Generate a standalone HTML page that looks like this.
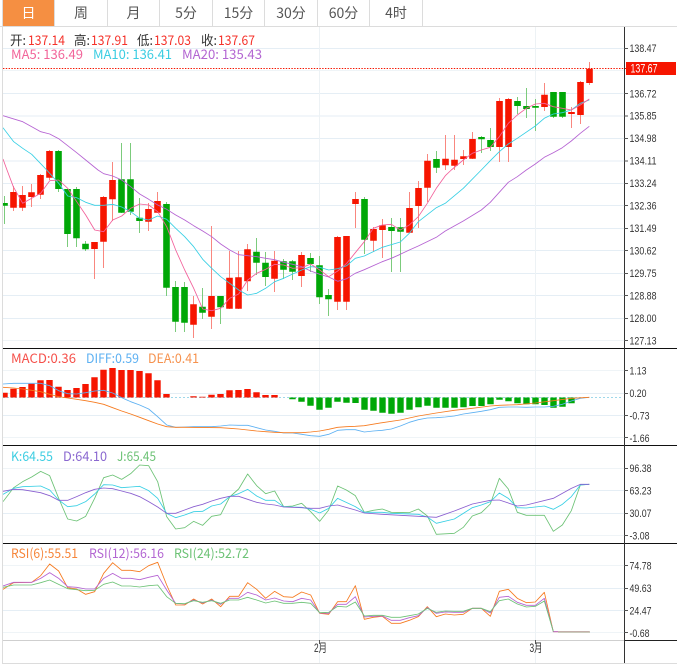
<!DOCTYPE html>
<html>
<head>
<meta charset="utf-8">
<style>
html,body{margin:0;padding:0;background:#fff;width:677px;height:670px;overflow:hidden}
svg{display:block;position:absolute;left:0;top:0}
text{font-family:"Liberation Sans","Noto Sans CJK SC",sans-serif}
.n text{font-family:"Noto Sans CJK SC","Liberation Sans",sans-serif;font-size:13px}
.t{font-family:"Noto Sans CJK SC","Liberation Sans",sans-serif;font-size:14px;fill:#555;text-anchor:middle}
.a text{font-size:11px;fill:#333}
.l{fill:none;stroke-width:.85;vector-effect:non-scaling-stroke;stroke-linejoin:round}
</style>
</head>
<body>
<svg width="677" height="670" viewBox="0 0 677 670" xmlns="http://www.w3.org/2000/svg">
<defs><clipPath id="c"><rect x="3" y="27" width="621" height="636"/></clipPath></defs>

<!-- tabs -->
<rect x="3" y="0" width="51" height="26" fill="#f58f42"/>
<path d="M54.5 0V26M107.5 0V26M159.5 0V26M212.5 0V26M264.5 0V26M317.5 0V26M369.5 0V26M422.5 0V26" stroke="#dcdcdc" fill="none"/>
<path d="M0 26.5H677" stroke="#dcdcdc"/>
<path d="M2.5 0V663.5H677" stroke="#dcdcdc" fill="none"/>
<text x="28.5" y="18" class="t" style="fill:#fff">日</text>
<text x="81" y="18" class="t">周</text>
<text x="133.5" y="18" class="t">月</text>
<text x="186" y="18" class="t">5分</text>
<text x="238.5" y="18" class="t">15分</text>
<text x="291" y="18" class="t">30分</text>
<text x="343.5" y="18" class="t">60分</text>
<text x="396" y="18" class="t">4时</text>

<!-- grid -->
<path d="M3 48.5H624M3 93.5H624M3 116H624M3 138.5H624M3 161H624M3 183.5H624M3 205.5H624M3 228.5H624M3 250.5H624M3 273.5H624M3 295.5H624M3 318.5H624M3 393.5H624M3 415.5H624M3 490.5H624M3 513.5H624M3 588.5H624M3 610.5H624" stroke="#e5eef5"/>
<path d="M3 70.5H624M3 340.5H624M3 370.5H624M3 437.5H624M3 468.5H624M3 535.5H624M3 565.5H624M3 632.5H624" stroke="#eff4f7"/>
<path d="M319.5 27V663M535.5 27V663" stroke="#edf2f5"/>

<g clip-path="url(#c)">
<!-- wicks -->
<path fill="none" stroke="#f9877f" d="M13.5 186V211M22.5 186V211M31.5 184V207M40.5 174V199M49.5 150V180M94.5 242V279M103.5 196V268M112.5 162V221M148.5 203V231M157.5 192V213M193.5 296V338M211.5 226V329M229.5 251V309M238.5 251V309M247.5 244V291M274.5 251V292M301.5 252V287M337.5 236V310M346.5 236V310M355.5 192V228M373.5 227V252M382.5 219V258M409.5 192V233M418.5 181V228M427.5 154V202M445.5 135V170M454.5 135V170M463.5 150V165M472.5 132V159M499.5 98V162M508.5 98V162M544.5 83V111M571.5 107V128M580.5 81V124M589.5 62V85"/>
<path fill="none" stroke="#7ccb7c" d="M4.5 196V224M58.5 150V192M67.5 189V247M76.5 187V247M85.5 241V251M121.5 143V213M130.5 143V215M139.5 198V233M166.5 202V296M175.5 281V332M184.5 282V332M202.5 288V319M220.5 296V324M256.5 238V275M265.5 252V286M283.5 259V279M292.5 260V280M310.5 253V272M319.5 256V304M328.5 289V316M364.5 197V254M391.5 218V272M400.5 218V272M436.5 151V173M481.5 136V153M490.5 128V151M517.5 97V114M526.5 88V118M535.5 99V131M553.5 92V118M562.5 92V118"/>
<!-- bodies -->
<path fill="none" stroke="#f61500" stroke-width="6.6" d="M13.5 192V207.7M22.5 195V207.7M31.5 192.3V197M40.5 175V194.7M49.5 151V177.7M94.5 242V249M103.5 197V241.7M112.5 180V199.3M148.5 209V221.7M157.5 201V212.7M193.5 304.3V324.7M211.5 296V316.7M229.5 277.7V308.7M238.5 277.3V308.7M247.5 249.3V281.3M274.5 260.7V278.7M301.5 255V276M337.5 237V301.7M346.5 236V301.7M355.5 199V204M373.5 229V240.7M382.5 225.3V230M409.5 208V232.7M418.5 188V206M427.5 160.7V187.7M445.5 158.7V165.3M454.5 159.7V165.7M463.5 156.3V159M472.5 139V158.7M499.5 101V147M508.5 99V147M544.5 94.7V107M571.5 112V114M580.5 82V115M589.5 68.7V83"/>
<path fill="none" stroke="#00a707" stroke-width="6.6" d="M4.5 203V205.7M58.5 151V189M67.5 189V234M76.5 189V238.3M85.5 243.7V249.3M121.5 179.3V212.7M130.5 179.3V211.7M139.5 217.7V221M166.5 204V287.7M175.5 287V321.7M184.5 287V322.7M202.5 306.7V312.7M220.5 296V307.3M256.5 251.7V262.7M265.5 262.7V277M283.5 261.3V269.7M292.5 261.3V271.7M310.5 258V264M319.5 265.3V297.3M328.5 295V299.3M364.5 199V239.7M391.5 227V231M400.5 227.3V231.7M436.5 159V167.7M481.5 137V139.3M490.5 140V147M517.5 101V106M526.5 106V109M535.5 106V107.7M553.5 92V116.7M562.5 92V116.7"/>

<!-- MA lines -->
<polyline class="l" stroke="#b562d2" points="3,115.7 22.7,121.7 40.7,131.7 49.7,134 58.7,138.7 67.7,145.7 76.7,152.7 85.7,160 98,170 103.7,173.7 112.7,176 121.7,180 130.7,186.7 139.7,194 148.7,199.3 157.7,205 166.7,209.3 175.7,215 184.7,220 193.7,225.7 202.7,231 211.7,236.7 220.7,244 229.7,250 238.7,254.7 247.7,255.7 256.7,256.7 265.7,258.3 274.7,259.7 283.7,262.3 292.7,264.3 301.7,266.7 310.7,271 319.7,274.3 328.7,277 337.7,281.3 346.7,278.7 355.3,273.3 364.3,269.7 382.3,261.7 391.3,258.3 400.3,254.3 409.3,250 418.3,246 436.3,237.3 445.3,231 463.3,221 481.3,210 490.3,202.3 499.3,192.3 508.3,182.3 517.3,176.7 526.3,170 535.3,164 544.3,157.3 553.3,152.7 562.3,147.7 571.3,141 580.3,133.3 589.3,126.3"/>
<polyline class="l" stroke="#36cfe4" points="3,127.7 13.7,141.7 22.7,148.3 31.7,154.3 40.7,163.7 46.7,170 58.7,183.3 67.7,196 76.7,197.7 85.7,202.3 94.7,205.3 103.7,205.3 112.7,204.3 121.7,207 130.7,211.7 139.7,218.3 148.7,220 157.7,216 166.7,219.3 175.7,228.3 184.7,236.7 193.7,246.7 202.7,259.3 211.7,268.3 220.7,276.7 229.7,283.3 238.7,290 247.7,295 256.7,293.3 265.7,288.3 274.7,281.7 283.7,278.3 292.7,274 301.7,270 310.7,266.7 319.7,267.3 328.7,270 337.7,268.7 346.7,265.7 355.3,258.3 364.3,256 382.3,247.3 400.3,242 409.3,233.3 418.3,221.7 436.3,207.7 445.3,203.3 463.3,188.3 481.3,170 490.3,160.7 499.3,151.7 508.3,144 517.3,138.3 535.3,126 544.3,118.3 553.3,114 562.3,112.7 571.3,110 580.3,103.3 589.3,100"/>
<polyline class="l" stroke="#f2609a" points="3,159 7,170 13.3,186.7 22.7,203.3 31.7,198.3 40.7,193.3 49.7,180.7 58.7,180 67.7,188.3 76.7,201.7 85.7,215 94.7,230 103.7,231.7 112.7,220 121.7,216 130.7,208.3 139.7,204 148.7,205 157.7,211.7 166.7,226.7 175.7,250 184.7,270 193.7,288.3 202.7,309 211.7,310.7 220.7,308.3 229.7,298.3 238.7,294 247.7,280 256.7,273.3 265.7,269.3 274.7,264.3 283.7,265 292.7,268.3 301.7,267.7 310.7,264 319.7,270 328.7,276.7 337.7,271 346.7,263.3 355.3,252.7 364.3,241.7 373.3,228.3 382.3,225 391.3,224.3 400.3,230 409.3,225 418.3,216.7 427.3,203.3 436.3,188.3 445.3,175.7 451.3,170 463.3,160 472.3,153.3 481.3,150 490.3,147.3 499.3,136.7 508.3,123.3 517.3,115 526.3,108.3 535.3,104 544.3,103.3 553.3,106.7 562.3,108.3 571.3,110 580.3,105 589.3,99"/>

<!-- MACD zero -->
<path d="M3 397.5H622" stroke="#9fd8ea" stroke-dasharray="2 2" fill="none"/>
<!-- MACD bars -->
<path fill="none" stroke="#f61500" stroke-width="6.4" d="M4.5 392.7V397.5M13.5 388.7V397.5M22.5 387V397.5M31.5 383.7V397.5M40.5 380.3V397.5M49.5 380V397.5M58.5 386.7V397.5M67.5 390V397.5M76.5 388V397.5M85.5 384V397.5M94.5 377.3V397.5M103.5 369.7V397.5M112.5 368V397.5M121.5 370V397.5M130.5 370V397.5M139.5 371V397.5M148.5 373.3V397.5M157.5 380.3V397.5M166.5 394V397.5M193.5 396.3V397.5M202.5 396.7V397.5M211.5 394.7V397.5M220.5 394V397.5M229.5 390.3V397.5M238.5 390V397.5M247.5 389V397.5M256.5 392.3V397.5M265.5 395V397.5M274.5 395V397.5"/>
<path fill="none" stroke="#00a707" stroke-width="6.4" d="M292.5 397.5V399.3M301.5 397.5V401.7M310.5 397.5V405.7M319.5 397.5V409.7M328.5 397.5V407.7M337.5 397.5V401.7M346.5 397.5V402.7M355.5 397.5V403M364.5 397.5V409.7M373.5 397.5V410.7M382.5 397.5V412.7M391.5 397.5V413.7M400.5 397.5V412.7M409.5 397.5V409.7M418.5 397.5V407.3M427.5 397.5V405.7M436.5 397.5V407.7M445.5 397.5V407.7M454.5 397.5V407.7M463.5 397.5V407.3M472.5 397.5V406M481.5 397.5V406M490.5 397.5V404.3M499.5 397.5V399.7M508.5 397.5V401.3M517.5 397.5V403.3M526.5 397.5V404.3M535.5 397.5V404.3M544.5 397.5V405M553.5 397.5V407.7M562.5 397.5V406.7M571.5 397.5V403.3"/>
<!-- DIFF -->
<g transform="translate(0,345) scale(.33333)">
<polyline class="l" stroke="#5cb0f2" points="9,117 41,115 122,115 149,122 176,137 203,146 230,147 257,143 284,138 311,136 338,144 365,158 392,170 419,180 446,192 473,215 500,240 527,247 554,246 581,245 608,245 635,245 662,243 689,240 716,241 743,241 770,248 797,255 824,259 851,264 878,264 905,268 932,272 959,274 986,268 1013,256 1039,254 1066,254 1093,261 1120,258 1147,256 1174,252 1201,243 1228,232 1255,224 1282,219 1309,218 1336,216 1363,213 1390,207 1417,203 1444,199 1471,194 1498,187 1525,186 1552,186 1579,187 1606,186 1633,186 1660,184 1687,178 1714,168 1741,160 1768,157"/>
<polyline class="l" stroke="#f67a1e" points="9,127 41,129 68,132 95,136 122,140 149,148 176,155 203,159 230,163 257,167 284,172 311,178 338,188 365,198 392,207 419,217 446,227 473,237 500,245 527,247 554,247 662,248 689,250 716,252 743,255 770,258 797,260 824,262 851,263 905,263 932,261 959,258 986,253 1013,247 1039,245 1066,244 1093,242 1147,233 1201,225 1255,213 1309,204 1363,196 1417,190 1471,183 1498,181 1552,179 1606,174 1660,167 1714,160 1768,157"/>
</g>

<!-- KDJ -->
<g transform="translate(0,445) scale(.33333)">
<polyline class="l" stroke="#6cc275" points="9,170 41,128 68,110 95,96 122,79 149,92 176,160 203,222 230,228 257,214 284,160 311,98 338,90 365,103 392,86 419,60 446,62 473,110 500,215 527,252 554,248 581,229 608,241 635,214 662,209 689,156 716,132 743,87 770,122 797,146 824,138 851,185 878,183 905,175 932,200 959,229 986,195 1013,123 1039,135 1066,152 1093,202 1120,196 1147,192 1174,202 1228,203 1255,192 1282,213 1309,268 1363,265 1390,247 1417,213 1444,203 1471,177 1498,100 1525,132 1552,202 1579,211 1633,211 1660,259 1687,240 1714,197 1741,120 1768,118"/>
<polyline class="l" stroke="#36cfe4" points="9,148 41,130 68,125 122,123 149,135 176,165 203,185 230,182 257,170 284,147 311,119 338,120 365,128 392,126 419,124 446,137 473,160 500,205 527,218 554,210 581,200 608,199 635,183 662,177 689,155 716,146 743,133 770,153 797,166 824,166 851,185 878,186 905,187 932,193 959,204 986,190 1013,160 1066,185 1093,202 1147,202 1174,205 1255,208 1282,216 1309,235 1363,222 1390,205 1417,188 1444,180 1471,170 1498,144 1525,160 1552,188 1579,189 1633,183 1660,193 1687,178 1714,155 1741,120 1768,118"/>
<polyline class="l" stroke="#8a5fd0" points="9,139 41,133 68,134 122,143 149,152 176,166 203,166 230,155 257,143 284,133 311,129 338,131 365,138 392,145 419,155 446,170 473,186 500,205 527,205 554,195 581,185 608,178 635,168 662,160 689,154 716,154 743,163 770,172 797,177 824,180 851,186 905,188 932,190 959,190 986,183 1013,180 1066,195 1093,204 1147,208 1201,211 1255,214 1309,217 1363,198 1417,177 1471,166 1498,165 1552,183 1579,180 1660,160 1714,130 1741,118 1768,118"/>
</g>

<!-- RSI -->
<g transform="translate(0,545) scale(.33333)">
<polyline class="l" stroke="#f6791e" points="9,133 41,113 95,112 122,92 149,57 176,78 203,128 230,132 257,148 284,140 311,85 338,53 365,76 392,76 419,80 446,62 473,52 500,120 527,180 554,180 581,162 608,177 635,162 662,185 689,154 716,154 743,113 770,133 797,160 824,139 851,155 878,157 905,141 932,150 959,205 986,208 1013,170 1039,170 1066,122 1093,223 1120,217 1147,214 1174,235 1201,235 1228,226 1255,215 1282,185 1309,215 1336,207 1363,210 1390,208 1417,190 1444,190 1471,214 1498,139 1525,133 1552,160 1579,173 1606,171 1633,142 1660,260 1768,260"/>
<polyline class="l" stroke="#b562d2" points="9,123 41,112 95,112 122,100 149,83 176,100 203,125 230,127 257,132 284,132 311,100 338,85 365,100 392,100 419,104 446,97 473,91 500,135 527,175 554,177 581,165 608,174 635,165 662,178 689,160 716,160 743,142 770,150 797,165 824,159 851,168 878,170 905,160 932,165 959,204 986,205 1013,178 1039,178 1066,155 1093,216 1120,214 1147,213 1174,226 1201,226 1228,218 1255,212 1282,188 1309,205 1336,201 1363,202 1390,202 1417,190 1444,190 1471,204 1498,157 1525,154 1552,172 1579,181 1606,181 1633,160 1660,260 1768,260"/>
<polyline class="l" stroke="#6cc275" points="9,127 41,120 95,120 122,113 149,105 176,118 203,131 230,134 257,137 284,136 311,118 338,111 365,123 392,123 419,126 446,122 473,120 500,155 527,175 554,176 581,167 608,172 635,167 662,175 689,165 716,165 743,157 770,165 797,174 824,168 851,175 878,175 905,172 932,175 959,203 986,202 1013,184 1039,186 1066,171 1093,213 1120,211 1147,211 1174,217 1201,217 1228,212 1255,207 1282,190 1309,202 1336,198 1363,199 1390,199 1417,190 1444,190 1471,200 1498,167 1525,162 1552,177 1579,186 1606,184 1633,168 1660,260"/>
</g>
<path d="M558 632H590" stroke="#bdbba8" stroke-width="1.6" fill="none"/>
</g>

<!-- current price line -->
<path d="M3 68.5H626" stroke="#f61500" stroke-dasharray="1.4 1.4" fill="none"/>

<!-- panel separators -->
<path d="M3 348.5H677M3 445.5H677M3 543.5H677" stroke="#111"/>
<path d="M3 640.5H624" stroke="#cfcfcf"/>
<path d="M624 640.5H677" stroke="#222"/>
<path d="M624.5 27V663" stroke="#333"/>
<!-- ticks -->
<path d="M624 48.5H628M624 93.5H628M624 116H628M624 138.5H628M624 161H628M624 183.5H628M624 205.5H628M624 228.5H628M624 250.5H628M624 273.5H628M624 295.5H628M624 318.5H628M624 340.5H628M624 370.5H628M624 393.5H628M624 415.5H628M624 437.5H628M624 468.5H628M624 490.5H628M624 513.5H628M624 535.5H628M624 565.5H628M624 588.5H628M624 610.5H628M624 632.5H628M319.5 640V644M535.5 640V644" stroke="#555"/>

<!-- price tag -->
<rect x="626" y="62" width="50" height="13" fill="#f61500"/>
<text x="630.5" y="72.5" fill="#fff" font-size="12" textLength="27" lengthAdjust="spacingAndGlyphs">137.67</text>

<!-- axis labels -->
<g class="a">
<text x="629.5" y="52" textLength="27" lengthAdjust="spacingAndGlyphs">138.47</text>
<text x="629.5" y="97.5" textLength="27" lengthAdjust="spacingAndGlyphs">136.72</text>
<text x="629.5" y="119.5" textLength="27" lengthAdjust="spacingAndGlyphs">135.85</text>
<text x="629.5" y="142" textLength="27" lengthAdjust="spacingAndGlyphs">134.98</text>
<text x="629.5" y="164.5" textLength="27" lengthAdjust="spacingAndGlyphs">134.11</text>
<text x="629.5" y="187" textLength="27" lengthAdjust="spacingAndGlyphs">133.24</text>
<text x="629.5" y="209.5" textLength="27" lengthAdjust="spacingAndGlyphs">132.36</text>
<text x="629.5" y="232" textLength="27" lengthAdjust="spacingAndGlyphs">131.49</text>
<text x="629.5" y="254.5" textLength="27" lengthAdjust="spacingAndGlyphs">130.62</text>
<text x="629.5" y="277" textLength="27" lengthAdjust="spacingAndGlyphs">129.75</text>
<text x="629.5" y="299.5" textLength="27" lengthAdjust="spacingAndGlyphs">128.88</text>
<text x="629.5" y="322" textLength="27" lengthAdjust="spacingAndGlyphs">128.00</text>
<text x="629.5" y="344.5" textLength="27" lengthAdjust="spacingAndGlyphs">127.13</text>
<text x="629.5" y="374.5" textLength="17" lengthAdjust="spacingAndGlyphs">1.13</text>
<text x="629.5" y="397" textLength="17" lengthAdjust="spacingAndGlyphs">0.20</text>
<text x="629.5" y="419.5" textLength="20" lengthAdjust="spacingAndGlyphs">-0.73</text>
<text x="629.5" y="442" textLength="20" lengthAdjust="spacingAndGlyphs">-1.66</text>
<text x="629.5" y="472" textLength="22" lengthAdjust="spacingAndGlyphs">96.38</text>
<text x="629.5" y="494.5" textLength="22" lengthAdjust="spacingAndGlyphs">63.23</text>
<text x="629.5" y="517" textLength="22" lengthAdjust="spacingAndGlyphs">30.07</text>
<text x="629.5" y="539.5" textLength="20" lengthAdjust="spacingAndGlyphs">-3.08</text>
<text x="629.5" y="569.5" textLength="22" lengthAdjust="spacingAndGlyphs">74.78</text>
<text x="629.5" y="592" textLength="22" lengthAdjust="spacingAndGlyphs">49.63</text>
<text x="629.5" y="614.5" textLength="22" lengthAdjust="spacingAndGlyphs">24.47</text>
<text x="629.5" y="637" textLength="20" lengthAdjust="spacingAndGlyphs">-0.68</text>
</g>
<text x="314" y="652" font-size="12" fill="#333" textLength="13" lengthAdjust="spacingAndGlyphs">2月</text>
<text x="529.5" y="652" font-size="12" fill="#333" textLength="13" lengthAdjust="spacingAndGlyphs">3月</text>

<!-- legends -->
<g class="n">
<text x="10" y="45" fill="#333" textLength="16" lengthAdjust="spacingAndGlyphs">开:</text>
<text x="28" y="45" fill="#f5322a" textLength="37" lengthAdjust="spacingAndGlyphs">137.14</text>
<text x="74" y="45" fill="#333" textLength="16" lengthAdjust="spacingAndGlyphs">高:</text>
<text x="91" y="45" fill="#f5322a" textLength="37" lengthAdjust="spacingAndGlyphs">137.91</text>
<text x="137" y="45" fill="#333" textLength="16" lengthAdjust="spacingAndGlyphs">低:</text>
<text x="154" y="45" fill="#f5322a" textLength="37" lengthAdjust="spacingAndGlyphs">137.03</text>
<text x="201" y="45" fill="#333" textLength="16" lengthAdjust="spacingAndGlyphs">收:</text>
<text x="218" y="45" fill="#f5322a" textLength="37" lengthAdjust="spacingAndGlyphs">137.67</text>
<text x="11" y="59" fill="#f2659a" textLength="72" lengthAdjust="spacingAndGlyphs">MA5: 136.49</text>
<text x="93" y="59" fill="#3ccde2" textLength="79" lengthAdjust="spacingAndGlyphs">MA10: 136.41</text>
<text x="182" y="59" fill="#b366d2" textLength="80" lengthAdjust="spacingAndGlyphs">MA20: 135.43</text>
<text x="11" y="363" fill="#f5504a" textLength="65" lengthAdjust="spacingAndGlyphs">MACD:0.36</text>
<text x="86" y="363" fill="#5cb0f2" textLength="53" lengthAdjust="spacingAndGlyphs">DIFF:0.59</text>
<text x="148" y="363" fill="#f6924e" textLength="51" lengthAdjust="spacingAndGlyphs">DEA:0.41</text>
<text x="11" y="461" fill="#3ccde2" textLength="42" lengthAdjust="spacingAndGlyphs">K:64.55</text>
<text x="63" y="461" fill="#8a68d0" textLength="44" lengthAdjust="spacingAndGlyphs">D:64.10</text>
<text x="117" y="461" fill="#6cc275" textLength="39" lengthAdjust="spacingAndGlyphs">J:65.45</text>
<text x="11" y="558" fill="#f6853a" textLength="67" lengthAdjust="spacingAndGlyphs">RSI(6):55.51</text>
<text x="89" y="558" fill="#b366d2" textLength="75" lengthAdjust="spacingAndGlyphs">RSI(12):56.16</text>
<text x="174" y="558" fill="#6cc275" textLength="75" lengthAdjust="spacingAndGlyphs">RSI(24):52.72</text>
</g>
</svg>
</body>
</html>
